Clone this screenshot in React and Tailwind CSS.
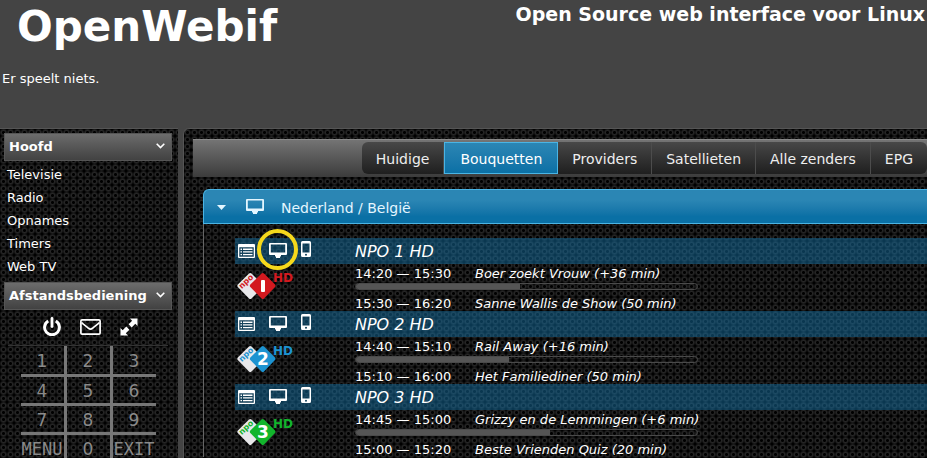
import React, { useState } from 'react';

const menuItems = ['Televisie', 'Radio', 'Opnames', 'Timers', 'Web TV'];

const tabs = ['Huidige', 'Bouquetten', 'Providers', 'Satellieten', 'Alle zenders', 'EPG'];

const remoteKeys = [
  ['1', '2', '3'],
  ['4', '5', '6'],
  ['7', '8', '9'],
  ['MENU', '0', 'EXIT'],
];

const channels = [
  {
    name: 'NPO 1 HD',
    digit: '1',
    color: '#d3191f',
    progress: 48,
    highlight: true,
    now: { time: '14:20 — 15:30', title: 'Boer zoekt Vrouw (+36 min)' },
    next: { time: '15:30 — 16:20', title: 'Sanne Wallis de Show (50 min)' },
  },
  {
    name: 'NPO 2 HD',
    digit: '2',
    color: '#1c93d1',
    progress: 45,
    now: { time: '14:40 — 15:10', title: 'Rail Away (+16 min)' },
    next: { time: '15:10 — 16:00', title: 'Het Familiediner (50 min)' },
  },
  {
    name: 'NPO 3 HD',
    digit: '3',
    color: '#12b52c',
    progress: 57,
    now: { time: '14:45 — 15:00', title: 'Grizzy en de Lemmingen (+6 min)' },
    next: { time: '15:00 — 15:20', title: 'Beste Vrienden Quiz (20 min)' },
  },
];

// Dark panel texture: a grid of small rings
const texture =
  'bg-black bg-[radial-gradient(circle,#000_1px,#262626_2px,#1a1a1a_3px,transparent_4px)] bg-[size:7px_7px]';

const MonitorIcon = () => (
  <svg width="18" height="15" viewBox="0 0 18 15" fill="currentColor" aria-hidden="true">
    <path
      fillRule="evenodd"
      d="M1 0h16a1 1 0 0 1 1 1v10a1 1 0 0 1-1 1h-5v1.500h-1V15H7v-1.500H6V12H1a1 1 0 0 1-1-1V1a1 1 0 0 1 1-1zm.8 1.500v8h14.400v-8z"
    />
  </svg>
);

const ListIcon = () => (
  <svg width="17" height="14" viewBox="0 0 17 14" fill="currentColor" aria-hidden="true">
    <path
      fillRule="evenodd"
      d="M1 0h15a1 1 0 0 1 1 1v12a1 1 0 0 1-1 1H1a1 1 0 0 1-1-1V1a1 1 0 0 1 1-1zm.3 3.200v9.500h14.400V3.200z"
    />
    <path d="M2.500 4.500h1.500v1.400H2.500zM5 4.500h9.500v1.400H5zM2.500 7.200h1.500v1.400H2.500zM5 7.200h9.500v1.400H5zM2.500 9.900h1.500v1.400H2.500zM5 9.900h9.500v1.400H5z" />
  </svg>
);

const PhoneIcon = () => (
  <svg width="10" height="16" viewBox="0 0 10 16" fill="currentColor" aria-hidden="true">
    <path
      fillRule="evenodd"
      d="M1.500 0h7A1.500 1.500 0 0 1 10 1.500v13A1.500 1.500 0 0 1 8.500 16h-7A1.500 1.500 0 0 1 0 14.500v-13A1.500 1.500 0 0 1 1.500 0zm0 2.500v9h7v-9zM5 12.700a1 1 0 1 0 0 2 1 1 0 0 0 0-2z"
    />
  </svg>
);

const PowerIcon = () => (
  <svg width="18" height="19" viewBox="0 0 18 19" fill="none" stroke="currentColor" strokeWidth="3" aria-hidden="true">
    <path d="M5.200 4A7.400 7.400 0 1 0 12.800 4" />
    <path d="M9 1.500v8" strokeLinecap="round" strokeWidth="2.800" />
  </svg>
);

const MailIcon = () => (
  <svg width="21" height="16" viewBox="0 0 21 16" fill="none" stroke="currentColor" strokeWidth="1.700" aria-hidden="true">
    <rect x="0.900" y="0.900" width="19.200" height="14.200" rx="1.200" />
    <path d="M1.500 3.500c2.500 2.500 5 4 7 5.800q2 1.500 4 0c2-1.800 4.500-3.300 7-5.800" />
  </svg>
);

const ExpandIcon = () => (
  <svg width="18" height="18" viewBox="0 0 18 18" fill="currentColor" aria-hidden="true">
    <path d="M10 .5H17.500V8L15.300 5.800 11.700 9.400 8.600 6.300 12.200 2.700zM8 17.500H.5V10L2.700 12.200 6.300 8.600 9.400 11.700 5.800 15.300z" />
  </svg>
);

const ChevronIcon = () => (
  <svg width="9" height="6" viewBox="0 0 9 6" fill="none" stroke="currentColor" strokeWidth="1.600" aria-hidden="true">
    <path d="M.7.700 4.500 4.500 8.300.7" />
  </svg>
);

const ChannelLogo = ({ digit, color }) => (
  <svg width="57" height="30" viewBox="0 0 57 30" fontFamily="DejaVu Sans, sans-serif" fontWeight="bold" aria-hidden="true">
    <path d="M14.500 2.600 27 15 14.500 27.500a2 2 0 0 1-2.500 0L.8 16a2 2 0 0 1 0-2.500L12 2.600a2 2 0 0 1 2.500 0z" fill="#e8e8ea" />
    <path d="M24.500 2.600a2 2 0 0 1 2.500 0L38 13.500a2 2 0 0 1 0 2.500L27 27.500a2 2 0 0 1-2.500 0L13.300 16a2 2 0 0 1 0-2.500z" fill={color} />
    <text y="2" transform="translate(9.500 11) rotate(-43)" textAnchor="middle" fontSize="8" fill={color}>
      npo
    </text>
    {digit === '1' ? (
      <rect x="24" y="9" width="4" height="12" rx="1" fill="#fff" />
    ) : (
      <text x="26" y="21" textAnchor="middle" fontSize="17" fill="#fff">
        {digit}
      </text>
    )}
    <text x="36" y="11" fontSize="12" fill={color}>
      HD
    </text>
  </svg>
);

const SideHeader = ({ children }) => (
  <h3>
    <button
      type="button"
      className="flex h-7 w-full items-center justify-between border border-[#555] bg-linear-to-b from-[#6c6c6c] to-[#424242] px-1 text-[13px] font-bold"
    >
      {children}
      <span className="pr-0.5 pb-0.5">
        <ChevronIcon />
      </span>
    </button>
  </h3>
);

const Programme = ({ item }) => (
  <div className="flex h-4 items-center text-[13px] leading-4">
    <span className="w-[120px] shrink-0">{item.time}</span>
    <span className="truncate italic">{item.title}</span>
  </div>
);

const Channel = ({ channel }) => (
  <li>
    <div className="flex h-[26px] items-center bg-[#146e9f]/50">
      <div className="flex w-[120px] shrink-0 items-center pl-[3px]">
        <button type="button" aria-label="EPG" className="w-[31px]">
          <ListIcon />
        </button>
        <button type="button" aria-label="Stream" className="relative w-8 pb-0.5">
          <MonitorIcon />
          {channel.highlight && (
            <span className="absolute -top-3.5 -left-3 size-[41px] rounded-full border-4 border-[#f5d81c]" />
          )}
        </button>
        <button type="button" aria-label="Mobiel" className="pb-1">
          <PhoneIcon />
        </button>
      </div>
      <h4 className="pt-0.5 text-base italic">{channel.name}</h4>
    </div>
    <div className="flex h-[47px]">
      <div className="w-[120px] shrink-0 pt-[7px] pl-0.5">
        <ChannelLogo digit={channel.digit} color={channel.color} />
      </div>
      <div className="min-w-0 flex-1 pt-0.5">
        <Programme item={channel.now} />
        <div className="mt-px mb-1.5 h-[7px] w-full max-w-[343px] overflow-hidden rounded-full border border-[#4a4a4a]">
          <div className="h-full bg-[#555]" style={{ width: `${channel.progress}%` }} />
        </div>
        <Programme item={channel.next} />
      </div>
    </div>
  </li>
);

const App = () => {
  const [activeTab, setActiveTab] = useState('Bouquetten');

  return (
    <div className="flex h-screen flex-col overflow-hidden bg-[#444] font-['DejaVu_Sans',Verdana,sans-serif] text-white">
      <header className="flex h-32 shrink-0 items-start justify-between">
        <div>
          <h1 className="pl-[17px] text-[42px] leading-[54px] font-bold">OpenWebif</h1>
          <p className="pt-[15px] pl-0.5 text-[13px] leading-5">Er speelt niets.</p>
        </div>
        <h2 className="pr-0.5 text-[19px] leading-7 font-bold whitespace-nowrap">Open Source web interface voor Linux</h2>
      </header>

      <div className="flex min-h-0 flex-1 gap-[5px]">
        <aside className={`${texture} w-[178px] shrink-0 border-t border-[#555] pt-1 pr-1.5 pl-1`}>
          <SideHeader>Hoofd</SideHeader>
          <ul className="pt-0.5 pb-1 pl-[3px] text-[13px] leading-[23px]">
            {menuItems.map((item) => (
              <li key={item}>
                <a href="#">{item}</a>
              </li>
            ))}
          </ul>
          <SideHeader>Afstandsbediening</SideHeader>
          <div className="mx-1 flex h-9 items-center justify-center gap-[19px] border-b border-[#333] pb-0.5 pl-1">
            <button type="button" aria-label="Power">
              <PowerIcon />
            </button>
            <button type="button" aria-label="Bericht">
              <MailIcon />
            </button>
            <button type="button" aria-label="Vergroten">
              <ExpandIcon />
            </button>
          </div>
          <table className="mx-auto border-collapse text-[17px] text-[#8a8a8a]">
            <tbody>
              {remoteKeys.map((row) => (
                <tr key={row[0]} className="border-b-3 border-[#777] last:border-b-0">
                  {row.map((key) => (
                    <td key={key} className="h-[29px] border-r-3 border-[#777] p-0 pt-0.5 text-center last:border-r-0 last:h-7">
                      <button
                        type="button"
                        className={
                          key.length > 1
                            ? "block w-[43px] font-['DejaVu_Sans_Mono',monospace] leading-4"
                            : 'block w-[43px] leading-4'
                        }
                      >
                        {key}
                      </button>
                    </td>
                  ))}
                </tr>
              ))}
            </tbody>
          </table>
        </aside>

        <main className={`${texture} min-w-0 flex-1 rounded-tl-md border-t border-l border-[#555] pt-2.5 pl-[9px]`}>
          <nav className="flex h-[38px] items-center justify-end border-t border-[#888] bg-linear-to-b from-[#747474] to-[#3c3c3c] pb-0.5">
            {tabs.map((tab) => (
              <button
                key={tab}
                type="button"
                onClick={() => setActiveTab(tab)}
                className={
                  tab === activeTab
                    ? 'h-8 border border-[#4ab4e4] bg-linear-to-b from-[#2b86b4] to-[#0a70a5] px-[15px] pt-0.5 text-sm'
                    : 'h-8 border-r border-[#4c4c4c] bg-linear-to-b from-[#484848] to-[#1f1f1f] px-3.5 pt-0.5 text-sm text-[#eee] first:rounded-l-md last:rounded-r-md last:border-r-0'
                }
              >
                {tab}
              </button>
            ))}
          </nav>

          <section className="mt-3 ml-2.5">
            <h3>
              <button
                type="button"
                className="flex h-[35px] w-full items-center rounded-tl-md border border-r-0 border-[#4ab4e4] bg-linear-to-b from-[#2b86b4] from-30% to-[#0a70a5] to-80% pt-0.5 pl-[13px] text-sm text-[#e4f6ff]"
              >
                <svg width="9" height="5" viewBox="0 0 9 5" fill="currentColor" aria-hidden="true">
                  <path d="M0 0h9L4.500 5z" />
                </svg>
                <span className="ml-5 w-[35px] pb-0.5">
                  <MonitorIcon />
                </span>
                Nederland / België
              </button>
            </h3>
            <ul className="border-l border-[#666] pt-3.5 pl-[31px]">
              {channels.map((channel) => (
                <Channel key={channel.name} channel={channel} />
              ))}
            </ul>
          </section>
        </main>
      </div>
    </div>
  );
};

export default App;
